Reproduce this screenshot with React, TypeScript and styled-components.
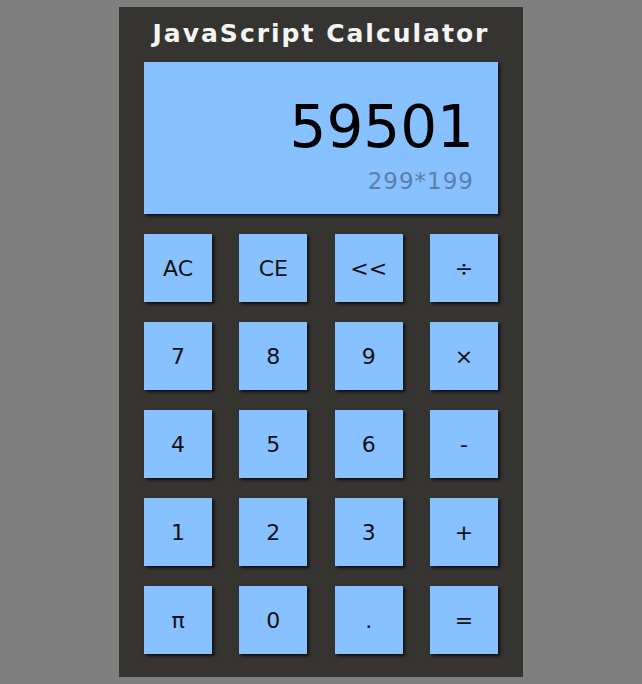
import React from "react";
import styled, { createGlobalStyle } from "styled-components";

const Global = createGlobalStyle`
  html, body {
    margin: 0;
    padding: 0;
    background: #7f7f7f;
  }
  body {
    font-family: "DejaVu Sans", "Liberation Sans", sans-serif;
  }
`;

const Page = styled.div`
  display: flex;
  justify-content: center;
  padding-top: 7px;
`;

const Calculator = styled.div`
  width: 404px;
  box-sizing: border-box;
  background: #353431;
  padding: 0 25px 23px;
  display: flex;
  flex-direction: column;
`;

const Title = styled.h1`
  margin: 0;
  height: 55px;
  box-sizing: border-box;
  padding-bottom: 3px;
  display: flex;
  align-items: center;
  justify-content: center;
  color: #f4f4f4;
  font-size: 25px;
  font-weight: bold;
  letter-spacing: 2px;
`;

const Display = styled.div`
  height: 152px;
  box-sizing: border-box;
  background: #87c1ff;
  box-shadow: 2px 2px 3px rgba(0, 0, 0, 0.7);
  padding: 36px 24px 0 0;
  display: flex;
  flex-direction: column;
  align-items: flex-end;
  gap: 14px;
`;

const Result = styled.div`
  font-size: 58px;
  line-height: 58px;
  color: #000;
`;

const Expression = styled.div`
  font-size: 23px;
  line-height: 23px;
  color: #5b7fa8;
  letter-spacing: 1px;
`;

const Keys = styled.div`
  margin-top: 20px;
  display: grid;
  grid-template-columns: repeat(4, 68px);
  grid-auto-rows: 68px;
  justify-content: space-between;
  row-gap: 20px;
`;

const Key = styled.button`
  border: none;
  margin: 0;
  padding: 0;
  background: #87c1ff;
  box-shadow: 2px 2px 3px rgba(0, 0, 0, 0.75);
  color: #111;
  font-family: "DejaVu Sans", "Liberation Sans", sans-serif;
  font-size: 22px;
  display: flex;
  align-items: center;
  justify-content: center;
  cursor: pointer;
`;

const keys = [
  "AC", "CE", "<<", "÷",
  "7", "8", "9", "×",
  "4", "5", "6", "-",
  "1", "2", "3", "+",
  "π", "0", ".", "=",
];

export default function App() {
  return (
    <>
      <Global />
      <Page>
        <Calculator>
          <Title>JavaScript Calculator</Title>
          <Display>
            <Result>59501</Result>
            <Expression>299*199</Expression>
          </Display>
          <Keys>
            {keys.map((k) => (
              <Key key={k}>{k}</Key>
            ))}
          </Keys>
        </Calculator>
      </Page>
    </>
  );
}
